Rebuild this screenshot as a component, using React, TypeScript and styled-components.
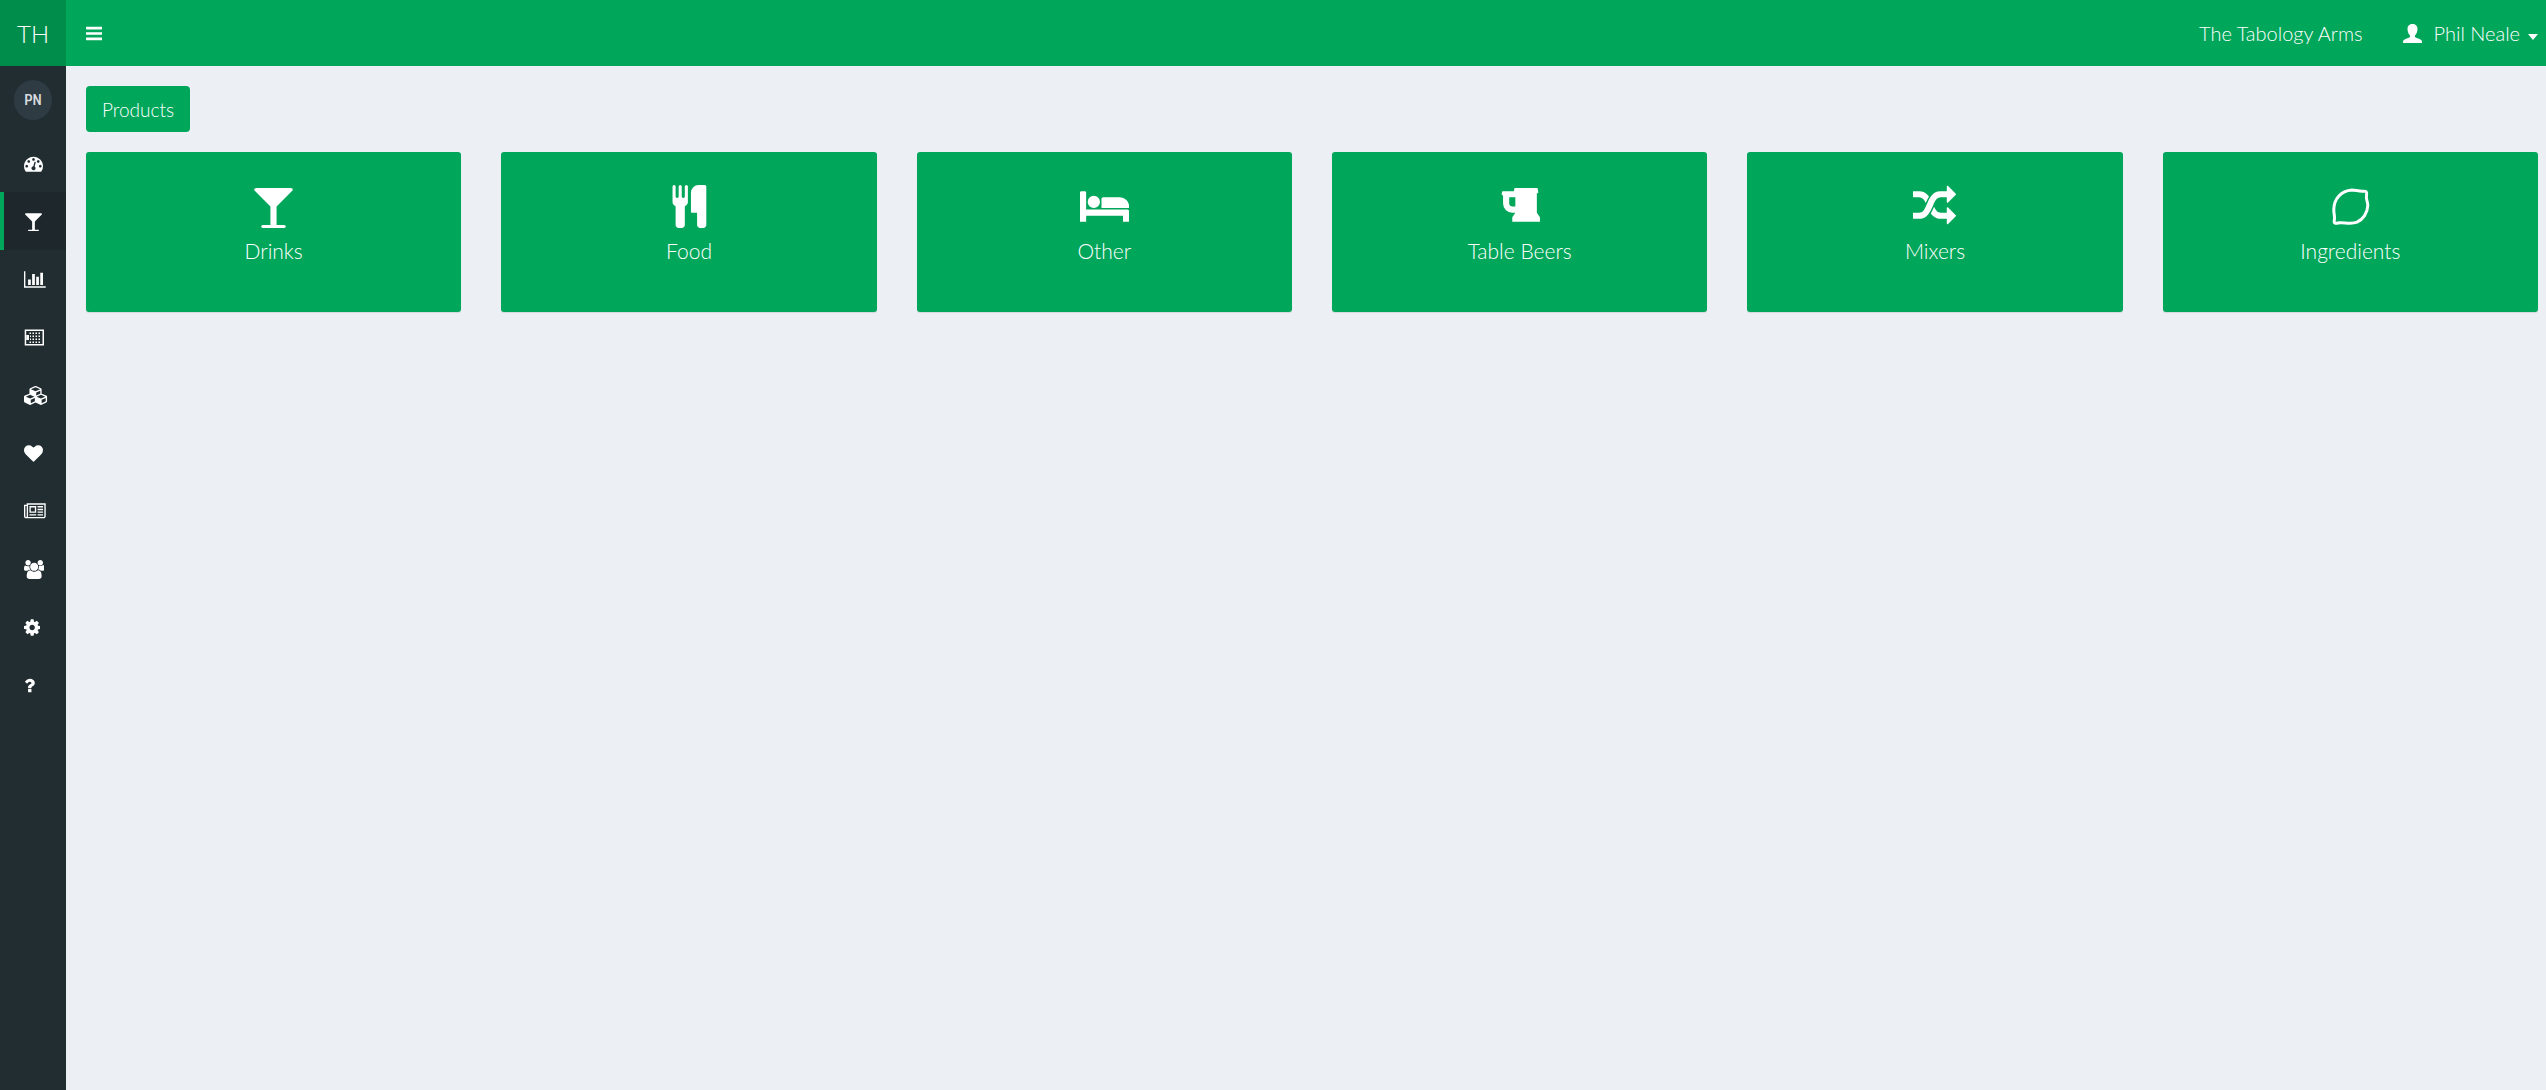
import React from 'react';
import styled, { createGlobalStyle } from 'styled-components';

const GlobalStyle = createGlobalStyle`
  *, *::before, *::after { box-sizing: border-box; }
  body {
    margin: 0;
    background: #ecf0f5;
    font-family: Lato, 'Liberation Sans', sans-serif;
    font-size: 20px;
    font-weight: 300;
    color: #fff;
  }
  a { color: inherit; text-decoration: none; }
  button { font: inherit; color: inherit; border: 0; cursor: pointer; }
`;

type Glyph = { box: string; d: string };

const glyphs: Record<string, Glyph> = {
  bars: {
    box: '128 0 1536 1792',
    d: 'M1664 1344v128q0 26-19 45t-45 19h-1408q-26 0-45-19t-19-45v-128q0-26 19-45t45-19h1408q26 0 45 19t19 45zm0-512v128q0 26-19 45t-45 19h-1408q-26 0-45-19t-19-45v-128q0-26 19-45t45-19h1408q26 0 45 19t19 45zm0-512v128q0 26-19 45t-45 19h-1408q-26 0-45-19t-19-45v-128q0-26 19-45t45-19h1408q26 0 45 19t19 45z',
  },
  gauge: {
    box: '0 0 1792 1792',
    d: 'M384 1152q0-53-37.5-90.5t-90.5-37.5-90.5 37.5-37.5 90.5 37.5 90.5 90.5 37.5 90.5-37.5 37.5-90.5zm192-448q0-53-37.5-90.5t-90.5-37.5-90.5 37.5-37.5 90.5 37.5 90.5 90.5 37.5 90.5-37.5 37.5-90.5zm428 481l101-382q6-26-7.5-48.5t-38.5-29.5-48 6.5-30 39.5l-101 382q-60 5-107 43.5t-63 98.5q-20 77 20 146t117 89 146-20 89-117q16-60-6-117t-72-91zm660-33q0-53-37.5-90.5t-90.5-37.5-90.5 37.5-37.5 90.5 37.5 90.5 90.5 37.5 90.5-37.5 37.5-90.5zm-640-640q0-53-37.5-90.5t-90.5-37.5-90.5 37.5-37.5 90.5 37.5 90.5 90.5 37.5 90.5-37.5 37.5-90.5zm448 192q0-53-37.5-90.5t-90.5-37.5-90.5 37.5-37.5 90.5 37.5 90.5 90.5 37.5 90.5-37.5 37.5-90.5zm320 448q0 261-141 483-19 29-54 29h-1402q-35 0-54-29-141-221-141-483 0-182 71-348t191-286 286-191 348-71 348 71 286 191 191 286 71 348z',
  },
  glass: {
    box: '0 0 1792 1792',
    d: 'M1699 186q0 35-43 78l-632 632v768h320q26 0 45 19t19 45-19 45-45 19h-896q-26 0-45-19t-19-45 19-45 45-19h320v-768l-632-632q-43-43-43-78 0-23 18-36.5t38-17.5 43-4h1408q23 0 43 4t38 17.5 18 36.5z',
  },
  chart: {
    box: '0 0 2048 1792',
    d: 'M640 896v512h-256v-512h256zm384-512v1024h-256v-1024h256zm1024 1152v128h-2048v-1536h128v1408h1920zm-640-896v768h-256v-768h256zm384-384v1152h-256v-1152h256z',
  },
  till: {
    box: '0 0 20 19',
    d: 'M.7 1.500H20V17.500H.7ZM2.200 3V16H18.500V3ZM2 7H5V12H2ZM5.500 4.500h1.500v1.500h-1.500ZM8.500 4.500h1.500v1.500h-1.500ZM11.500 4.500h1.500v1.500h-1.500ZM14.500 4.500h1.500v1.500h-1.500ZM6 7.500h1v1.500h-1ZM8.500 7.500h1.500v1.500h-1.500ZM11.500 7.500h1.500v1.500h-1.500ZM14.500 7.500h1.500v1.500h-1.500ZM6 10.500h1v1.500h-1ZM8.500 10.500h1.500v1.500h-1.500ZM11.500 10.500h1.500v1.500h-1.500ZM14.500 10.500h1.500v1.500h-1.500ZM5.500 13.500h1.500v1.500h-1.500ZM8.500 13.500h1.500v1.500h-1.500ZM11.500 13.500h1.500v1.500h-1.500ZM14.500 13.500h1.500v1.500h-1.500Z',
  },
  cubes: {
    box: '0 0 2304 1792',
    d: 'M640 1632l384-192v-314l-384 164v342zm-64-454l404-173-404-173-404 173zm1088 454l384-192v-314l-384 164v342zm-64-454l404-173-404-173-404 173zm-448-293l384-165v-266l-384 164v267zm-64-379l441-189-441-189-441 189zm1088 518v416q0 36-19 67t-52 47l-448 224q-25 14-57 14t-57-14l-448-224q-4-2-7-4-2 2-7 4l-448 224q-25 14-57 14t-57-14l-448-224q-33-16-52-47t-19-67v-416q0-38 21.5-70t56.5-48l434-186v-400q0-38 21.5-70t56.5-48l448-192q23-10 50-10t50 10l448 192q35 16 56.5 48t21.5 70v400l434 186q36 16 57 48t21 70z',
  },
  heart: {
    box: '0 0 1792 1792',
    d: 'M896 1664q-26 0-44-18l-624-602q-10-8-27.5-26t-55.5-65.5-68-97.5-53.5-121-23.5-138q0-220 127-344t351-124q62 0 126.5 21.5t120 58 95.5 68.5 76 68q36-36 76-68t95.5-68.5 120-58 126.5-21.5q224 0 351 124t127 344q0 221-229 450l-623 600q-18 18-44 18z',
  },
  news: {
    box: '0 0 2048 1792',
    d: 'M1024 512h-384v384h384v-384zm128 640v128h-640v-128h640zm0-768v640h-640v-640h640zm640 768v128h-512v-128h512zm0-256v128h-512v-128h512zm0-256v128h-512v-128h512zm0-256v128h-512v-128h512zm-1536 960v-960h-128v960q0 26 19 45t45 19 45-19 19-45zm1664 0v-1088h-1536v1088q0 33-11 64h1483q26 0 45-19t19-45zm128-1216v1216q0 80-56 136t-136 56h-1664q-80 0-136-56t-56-136v-1088h256v-128h1792z',
  },
  users: {
    box: '0 0 1920 1792',
    d: 'M593 896q-162 5-265 128h-134q-82 0-138-40.5t-56-118.5q0-353 124-353 6 0 43.5 21t97.5 42.5 119 21.5q67 0 133-23-5 37-5 66 0 159 93 285zm1071 637q0 120-73 189.5t-194 69.5h-874q-121 0-194-69.5t-73-189.5q0-53 3.5-103.5t14-109 26.5-108.5 43-97.5 62-81 85.5-53.5 111.5-20q10 0 43 21.5t73 48 107 48 135 21.5 135-21.5 107-48 73-48 43-21.5q61 0 111.5 20t85.5 53.5 62 81 43 97.5 26.5 108.5 14 109 3.5 103.5zm-1024-1277q0 106-75 181t-181 75-181-75-75-181 75-181 181-75 181 75 75 181zm704 384q0 159-112.5 271.5t-271.5 112.5-271.5-112.5-112.5-271.5 112.5-271.5 271.5-112.5 271.5 112.5 112.5 271.5zm576 225q0 78-56 118.5t-138 40.5h-134q-103-123-265-128 93-126 93-285 0-29-5-66 66 23 133 23 59 0 119-21.5t97.5-42.5 43.5-21q124 0 124 353zm-128-609q0 106-75 181t-181 75-181-75-75-181 75-181 181-75 181 75 75 181z',
  },
  cog: {
    box: '128 0 1536 1792',
    d: 'M1152 896q0-106-75-181t-181-75-181 75-75 181 75 181 181 75 181-75 75-181zm512-109v222q0 12-8 23t-20 13l-185 28q-19 54-39 91 35 50 107 138 10 12 10 25t-9 23q-27 37-99 108t-94 71q-12 0-26-9l-138-108q-44 23-91 38-16 136-29 186-7 28-36 28h-222q-14 0-24.5-8.5t-11.5-21.5l-28-184q-49-16-90-37l-141 107q-10 9-25 9-14 0-25-11-126-114-165-168-7-10-7-23 0-12 8-23 15-21 51-66.5t54-70.5q-27-50-41-99l-183-27q-13-2-21-12.5t-8-23.5v-222q0-12 8-23t19-13l186-28q14-46 39-92-40-57-107-138-10-12-10-24 0-10 9-23 26-36 98.5-107.5t94.5-71.5q13 0 26 10l138 107q44-23 91-38 16-136 29-186 7-28 36-28h222q14 0 24.5 8.5t11.5 21.5l28 184q49 16 90 37l142-107q9-9 24-9 13 0 25 10 129 119 165 170 7 8 7 22 0 12-8 23-15 21-51 66.5t-54 70.5q26 50 41 98l183 28q13 2 21 12.5t8 23.5z',
  },
  question: {
    box: '384 0 1024 1792',
    d: 'M1088 1256v240q0 16-12 28t-28 12h-240q-16 0-28-12t-12-28v-240q0-16 12-28t28-12h240q16 0 28 12t12 28zm316-600q0 54-15.5 101t-35 76.5-55 59.5-57.5 43.5-61 35.5q-41 23-68.5 65t-27.5 67q0 17-12 32.5t-28 15.5h-240q-15 0-25.5-18.5t-10.5-37.5v-45q0-83 65-156.5t143-108.5q59-27 84-56t25-76q0-42-46.5-74t-107.5-32q-65 0-108 29-35 25-107 115-13 16-31 16-12 0-25-8l-164-125q-13-10-15.5-25t5.5-28q160-266 464-266 80 0 161 31t146 83 106 127.5 41 158.5z',
  },
  cutlery: {
    box: '0 0 1536 1792',
    d: 'M704 64v640q0 61-35.5 111t-92.5 70v779q0 52-38 90t-90 38h-128q-52 0-90-38t-38-90v-779q-57-20-92.5-70t-35.5-111v-640q0-26 19-45t45-19 45 19 19 45v416q0 26 19 45t45 19 45-19 19-45v-416q0-26 19-45t45-19 45 19 19 45v416q0 26 19 45t45 19 45-19 19-45v-416q0-26 19-45t45-19 45 19 19 45zm768 0v1600q0 52-38 90t-90 38h-128q-52 0-90-38t-38-90v-512h-224q-13 0-22.5-9.5t-9.5-22.5v-800q0-132 94-226t226-94h256q26 0 45 19t19 45z',
  },
  bed: {
    box: '0 0 2048 1792',
    d: 'M256 1024h1728q26 0 45 19t19 45v448h-256v-256h-1536v256h-256v-1216q0-26 19-45t45-19h128q26 0 45 19t19 45v704zm576-320q0-106-75-181t-181-75-181 75-75 181 75 181 181 75 181-75 75-181zm1216 256v-64q0-159-112.5-271.5t-271.5-112.5h-704q-26 0-45 19t-19 45v384h1152z',
  },
  beer: {
    box: '64 0 1664 1792',
    d: 'M704 896v-384h-256v256q0 53 37.5 90.5t90.5 37.5h128zm1024 448v192h-1152v-192l128-192h-128q-159 0-271.5-112.5t-112.5-271.5v-320l-64-64 32-128h480l32-128h960l32 192-64 32v800z',
  },
  random: {
    box: '0 0 1792 1792',
    d: 'M666 481q-60 92-137 273-22-45-37-72.5t-40.5-63.5-51-56.5-63-35-81.5-14.5h-224q-14 0-23-9t-9-23v-192q0-14 9-23t23-9h224q250 0 410 225zm1126 799q0 14-9 23l-320 320q-9 9-23 9-13 0-22.5-9.5t-9.5-22.5v-192q-32 0-85 .5t-81 1-73-1-71-5-64-10.5-63-18.5-58-28.5-59-40-55-53.5-56-69.5q59-93 136-273 22 45 37 72.5t40.5 63.5 51 56.5 63 35 81.5 14.5h256v-192q0-14 9-23t23-9q12 0 24 10l319 319q9 9 9 23zm0-896q0 14-9 23l-320 320q-9 9-23 9-13 0-22.5-9.5t-9.5-22.5v-192h-256q-48 0-87 15t-69 45-51 61.5-45 77.5q-32 62-78 171-29 66-49.5 111t-54 105-64 100-74 83-90 68.5-106.5 42-128 16.5h-224q-14 0-23-9t-9-23v-192q0-14 9-23t23-9h224q48 0 87-15t69-45 51-61.5 45-77.5q32-62 78-171 29-66 49.5-111t54-105 64-100 74-83 90-68.5 106.5-42 128-16.5h256v-192q0-14 9-23t23-9q12 0 24 10l319 319q9 9 9 23z',
  },
  person: {
    box: '0 0 19 19',
    d: 'M9.500 0C12.400 0 14.500 1.900 14.500 4.800C14.500 7.600 13.600 9.800 12.200 11.200C11.700 11.800 11.700 12.800 12.300 13.200C14 14.100 16.800 14.900 18.200 16C18.900 16.600 19 17.600 19 19H0C0 17.600 .1 16.600 .8 16C2.200 14.900 5 14.100 6.700 13.200C7.300 12.800 7.300 11.800 6.800 11.200C5.400 9.800 4.500 7.600 4.500 4.800C4.500 1.900 6.600 0 9.500 0Z',
  },
};

const GlyphSvg = styled.svg<{ $size: number }>`
  display: block;
  flex: none;
  height: ${(p) => p.$size}px;
  fill: currentColor;
`;

function Icon({ name, size = 19 }: { name: string; size?: number }) {
  if (name === 'lemon') {
    return (
      <GlyphSvg $size={size} viewBox="0 0 43 43" aria-hidden="true">
        <path
          d="M23 5C27 5 29 6.500 34.500 6.200C37 6 38 7 37.600 9.500C36.600 15 38.800 16 38.800 20.500C38.500 28 34 34.500 28 37.200C22 39.500 15 37.200 10.500 37.800C7 38.600 5 38.800 5.200 36C6.400 31.500 4.600 29 4.800 24.500C5 14 11.500 6 23 5Z"
          fill="none"
          stroke="currentColor"
          strokeWidth="3"
        />
      </GlyphSvg>
    );
  }
  const glyph = glyphs[name];
  return (
    <GlyphSvg $size={size} viewBox={glyph.box} aria-hidden="true">
      <path d={glyph.d} fillRule={name === 'till' ? 'evenodd' : 'nonzero'} />
    </GlyphSvg>
  );
}

const Shell = styled.div`
  display: grid;
  grid-template-columns: 66px minmax(0, 1fr);
  grid-template-rows: 66px 1fr;
  min-height: 100vh;
`;

const Logo = styled.a`
  display: flex;
  align-items: center;
  justify-content: center;
  background: #008d4c;
  font-size: 24px;
`;

const TopBar = styled.header`
  display: flex;
  align-items: center;
  justify-content: space-between;
  padding: 0 8px 0 0;
  background: #00a65a;
`;

const MenuToggle = styled.button`
  display: flex;
  align-items: center;
  height: 66px;
  padding: 0 20px;
  background: transparent;
`;

const Account = styled.div`
  display: flex;
  align-items: center;
  gap: 40px;
`;

const UserMenu = styled.button`
  display: flex;
  align-items: center;
  gap: 12px;
  height: 66px;
  padding: 0;
  background: transparent;
`;

const UserName = styled.span`
  display: flex;
  align-items: center;
  gap: 8px;
`;

const Caret = styled.span`
  margin-top: 8px;
  border-top: 6px solid #fff;
  border-left: 5px solid transparent;
  border-right: 5px solid transparent;
`;

const Sidebar = styled.aside`
  background: #222d32;
`;

const Profile = styled.div`
  display: flex;
  padding: 14px;
`;

const Avatar = styled.div`
  display: flex;
  align-items: center;
  justify-content: center;
  width: 40px;
  height: 40px;
  border-radius: 50%;
  background: #2f3b43;
  color: #d8dcde;
  font-family: 'Roboto Condensed', 'Liberation Sans Narrow', Roboto, sans-serif;
  font-size: 15px;
  font-weight: 500;
`;

const NavLink = styled.a<{ $active?: boolean }>`
  display: flex;
  align-items: center;
  height: 58px;
  padding-left: 20px;
  border-left: 4px solid ${(p) => (p.$active ? '#00a65a' : 'transparent')};
  background: ${(p) => (p.$active ? '#1e282c' : 'transparent')};
`;

const Content = styled.main`
  padding: 20px 8px 20px 20px;
`;

const CategoryButton = styled.button`
  display: block;
  height: 46px;
  margin-bottom: 20px;
  padding: 0 16px;
  border-radius: 4px;
  background: #00a65a;
  font-size: 19px;
`;

const Tiles = styled.div`
  display: grid;
  grid-template-columns: repeat(6, minmax(0, 1fr));
  gap: 40px;
`;

const Tile = styled.button`
  display: flex;
  flex-direction: column;
  align-items: center;
  gap: 10px;
  height: 160px;
  padding: 33px 16px;
  border-radius: 3px;
  background: #00a65a;
  box-shadow: 0 1px 1px rgba(0, 0, 0, 0.1);
  font-size: 21px;
  line-height: 26px;
`;

const navItems = [
  { icon: 'gauge', label: 'Dashboard' },
  { icon: 'glass', label: 'Products' },
  { icon: 'chart', label: 'Reports' },
  { icon: 'till', label: 'Tills' },
  { icon: 'cubes', label: 'Stock' },
  { icon: 'heart', label: 'Loyalty' },
  { icon: 'news', label: 'News' },
  { icon: 'users', label: 'Staff' },
  { icon: 'cog', label: 'Settings' },
  { icon: 'question', label: 'Help' },
];

const tiles = [
  { icon: 'glass', label: 'Drinks' },
  { icon: 'cutlery', label: 'Food' },
  { icon: 'bed', label: 'Other' },
  { icon: 'beer', label: 'Table Beers' },
  { icon: 'random', label: 'Mixers' },
  { icon: 'lemon', label: 'Ingredients' },
];

export default function App() {
  return (
    <>
      <GlobalStyle />
      <Shell>
        <Logo href="#">TH</Logo>
        <TopBar>
          <MenuToggle type="button" aria-label="Toggle navigation">
            <Icon name="bars" />
          </MenuToggle>
          <Account>
            <a href="#venue">The Tabology Arms</a>
            <UserMenu type="button">
              <Icon name="person" />
              <UserName>
                Phil Neale
                <Caret />
              </UserName>
            </UserMenu>
          </Account>
        </TopBar>
        <Sidebar>
          <Profile>
            <Avatar>PN</Avatar>
          </Profile>
          <nav>
            {navItems.map((item) => (
              <NavLink
                key={item.icon}
                href={`#${item.icon}`}
                aria-label={item.label}
                $active={item.icon === 'glass'}
              >
                <Icon name={item.icon} />
              </NavLink>
            ))}
          </nav>
        </Sidebar>
        <Content>
          <CategoryButton type="button">Products</CategoryButton>
          <Tiles>
            {tiles.map((tile) => (
              <Tile key={tile.label} type="button">
                <Icon name={tile.icon} size={43} />
                {tile.label}
              </Tile>
            ))}
          </Tiles>
        </Content>
      </Shell>
    </>
  );
}
